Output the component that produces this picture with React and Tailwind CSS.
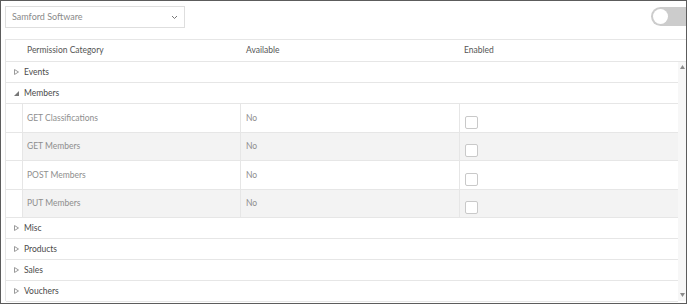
import React from "react";

const F = { fontFamily: "Lato, 'Open Sans', sans-serif" };

function TriRight() {
  return (
    <svg width="5" height="6" viewBox="0 0 5 6" className="shrink-0">
      <path d="M0.5 0.5 L4.5 3 L0.5 5.5 Z" fill="none" stroke="#9a9a9a" strokeWidth="1" />
    </svg>
  );
}
function TriSE() {
  return (
    <svg width="5" height="5" viewBox="0 0 5 5" className="shrink-0">
      <path d="M5 0 L5 5 L0 5 Z" fill="#777" />
    </svg>
  );
}

function CatRow({ label, open }) {
  return (
    <div className="h-[21px] border-b border-[#e6e6e6] flex items-center pl-[8px]">
      <div className="w-[10px] flex items-center">{open ? <TriSE /> : <TriRight />}</div>
      <span className="text-[8.5px] text-[#4a4a4a]">{label}</span>
    </div>
  );
}

function SubRow({ label, gray, h, cbTop }) {
  return (
    <div className={`flex border-b border-[#e6e6e6] ${gray ? "bg-[#f3f3f3]" : "bg-white"}`} style={{ height: h }}>
      <div className="w-[16px] bg-white shrink-0" />
      <div className="w-[218px] border-l border-[#e6e6e6] pl-[4px] flex items-center text-[8.5px] text-[#8e8e8e] shrink-0">
        {label}
      </div>
      <div className="w-[219px] border-l border-[#e6e6e6] pl-[5px] flex items-center text-[8.5px] text-[#8e8e8e] shrink-0">
        No
      </div>
      <div className="flex-1 border-l border-[#e6e6e6] pl-[5px]">
        <div
          className="w-[13px] h-[13px] rounded-[2px] border border-[#c9c9c9] bg-white"
          style={{ marginTop: cbTop }}
        />
      </div>
    </div>
  );
}

export default function App() {
  return (
    <div className="w-[687px] h-[304px] border border-[#5c5c5c] bg-white overflow-hidden" style={F}>
      <div className="flex justify-between items-start">
        <div className="ml-[4px] mt-[5px] w-[180px] h-[22px] border border-[#dedede] flex items-center justify-between pl-[6px] pr-[6px]">
          <span className="text-[9px] text-[#8a8a8a]">Samford Software</span>
          <svg width="7" height="5" viewBox="0 0 7 5">
            <path d="M1 1 L3.5 3.5 L6 1" fill="none" stroke="#777" strokeWidth="1" />
          </svg>
        </div>
        <div className="mt-[6px] w-[35px] h-[19px] rounded-l-full bg-[#cccccc] flex items-center pl-[2px]">
          <div className="w-[15px] h-[15px] rounded-full bg-white" />
        </div>
      </div>

      <div className="ml-[4px] mt-[11px]">
        <div className="h-[23px] border-t border-b border-l border-[#e6e6e6] flex items-center text-[8.5px] text-[#555]">
          <div className="w-[234px] pl-[21px]">Permission Category</div>
          <div className="w-[218px] pl-[6px]">Available</div>
          <div className="pl-[6px]">Enabled</div>
        </div>
        <div className="flex h-[239px]">
          <div className="w-[673px] border-l border-[#e6e6e6]">
            <CatRow label="Events" />
            <CatRow label="Members" open />
            <SubRow label="GET Classifications" h={29} cbTop={12} />
            <SubRow label="GET Members" gray h={28} cbTop={11} />
            <SubRow label="POST Members" h={29} cbTop={12} />
            <SubRow label="PUT Members" gray h={28} cbTop={11} />
            <CatRow label="Misc" />
            <CatRow label="Products" />
            <CatRow label="Sales" />
            <CatRow label="Vouchers" />
          </div>
          <div className="w-[8px] bg-[#f7f7f7] flex flex-col items-center justify-between pt-[3px] pb-[4px]">
            <svg width="5" height="4" viewBox="0 0 5 4">
              <path d="M2.5 0 L5 4 L0 4 Z" fill="#8a8a8a" />
            </svg>
            <svg width="5" height="4" viewBox="0 0 5 4">
              <path d="M0 0 L5 0 L2.5 4 Z" fill="#8a8a8a" />
            </svg>
          </div>
        </div>
      </div>
    </div>
  );
}
